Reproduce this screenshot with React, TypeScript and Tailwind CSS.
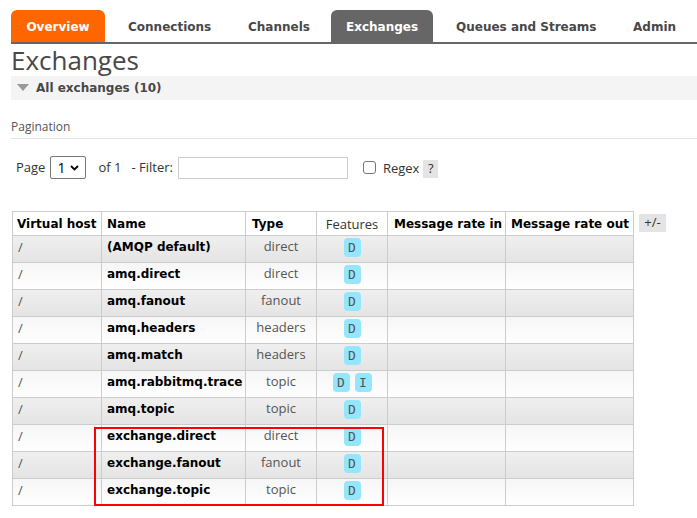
import React from "react";

const rows: { name: string; type: string; feats: string[] }[] = [
  { name: "(AMQP default)", type: "direct", feats: ["D"] },
  { name: "amq.direct", type: "direct", feats: ["D"] },
  { name: "amq.fanout", type: "fanout", feats: ["D"] },
  { name: "amq.headers", type: "headers", feats: ["D"] },
  { name: "amq.match", type: "headers", feats: ["D"] },
  { name: "amq.rabbitmq.trace", type: "topic", feats: ["D", "I"] },
  { name: "amq.topic", type: "topic", feats: ["D"] },
  { name: "exchange.direct", type: "direct", feats: ["D"] },
  { name: "exchange.fanout", type: "fanout", feats: ["D"] },
  { name: "exchange.topic", type: "topic", feats: ["D"] },
];

const bold = "font-['DejaVu_Sans','Verdana',sans-serif] font-bold";

export default function App() {
  return (
    <div className="relative w-[697px] h-[518px] overflow-hidden bg-white font-['Open_Sans','Noto_Sans',sans-serif] text-[#484848]">
      {/* nav */}
      <div className="pl-[11px] pt-[10px]">
        <div className={`flex items-end h-[34px] border-b-2 border-[#666] text-[12px] ${bold}`}>
          <div className="w-[94px] h-full pt-[1px] rounded-t-[6px] bg-[#ff6600] text-white flex items-center justify-center">Overview</div>
          <div className="w-[141px] h-full pt-[1px] flex items-center pl-[23px] text-[#484848]">Connections</div>
          <div className="w-[85px] h-full pt-[1px] flex items-center pl-[2px] text-[#484848]">Channels</div>
          <div className="w-[102px] h-full pt-[1px] rounded-t-[6px] bg-[#666] text-white flex items-center justify-center">Exchanges</div>
          <div className="w-[177px] h-full pt-[1px] flex items-center pl-[23px] text-[#484848]">Queues and Streams</div>
          <div className="h-full pt-[1px] flex items-center pl-[23px] text-[#484848]">Admin</div>
        </div>
      </div>
      {/* heading */}
      <div className="pl-[11px]">
        <h1 className="text-[26px] leading-[32px] text-[#484848] font-normal">Exchanges</h1>
        <div className="h-[24px] bg-[#f4f4f4] flex items-center">
          <svg width="12" height="8" viewBox="0 0 12 8" className="ml-[6px] mr-[7px]">
            <polygon points="0,0 12,0 6,7" fill="#999" />
          </svg>
          <span className={`text-[12px] text-[#484848] ${bold}`}>All exchanges (10)</span>
        </div>
        <div className="mt-[19px] text-[12px] leading-[16px] text-[#555] pb-[3px] border-b border-[#e4e4e4]">Pagination</div>
        {/* pagination row */}
        <div className="flex items-center h-[23px] mt-[17px] text-[13px] text-[#333]">
          <span className="ml-[5px]">Page</span>
          <div className="ml-[5px] w-[36px] h-[23px] border border-[#767676] rounded-[2px] flex items-center justify-between px-[6px] text-[14px] text-black">
            <span>1</span>
            <svg width="9" height="6" viewBox="0 0 9 6"><path d="M1 1 L4.5 4.5 L8 1" stroke="#000" strokeWidth="1.8" fill="none" /></svg>
          </div>
          <span className="ml-[12px]">of 1</span>
          <span className="ml-[10px]">- Filter:</span>
          <div className="ml-[5px] w-[170px] h-[22px] border border-[#ccc]" />
          <div className="ml-[15px] w-[13px] h-[13px] border border-[#767676] rounded-[3px] bg-white" />
          <span className="ml-[7px] mt-[3px]">Regex</span>
          <span className="ml-[4px] mt-[2px] w-[15px] h-[18px] bg-[#e4e4e4] flex items-center justify-center text-[13px]">?</span>
        </div>
        {/* table */}
        <div className="flex items-start mt-[32px] pl-[1px]">
          <table className="table-fixed w-[621px] border-collapse text-[13px] leading-[16px] whitespace-nowrap">
            <colgroup>
              <col className="w-[89px]" />
              <col className="w-[144px]" />
              <col className="w-[71px]" />
              <col className="w-[71px]" />
              <col className="w-[118px]" />
              <col className="w-[128px]" />
            </colgroup>
            <thead>
              <tr className="h-[24px] bg-white">
                <th className={`border border-[#ccc] text-left px-[4px] text-black text-[12px] ${bold}`}>Virtual host</th>
                <th className={`border border-[#ccc] text-left px-[5px] text-black text-[12px] ${bold}`}>Name</th>
                <th className={`border border-[#ccc] text-left px-[6px] text-black text-[12px] ${bold}`}>Type</th>
                <th className="border border-[#ccc] text-center font-normal text-[#333] text-[13px]">Features</th>
                <th className={`border border-[#ccc] text-left px-[6px] text-black text-[12px] ${bold}`}>Message rate in</th>
                <th className={`border border-[#ccc] text-left px-[5px] text-black text-[12px] ${bold}`}>Message rate out</th>
              </tr>
            </thead>
            <tbody>
              {rows.map((r, i) => (
                <tr
                  key={r.name}
                  className={`h-[27px] ${i % 2 === 0 ? "bg-gradient-to-b from-[#efefef] to-[#e4e4e4]" : "bg-gradient-to-b from-[#f6f6f6] to-[#ffffff]"}`}
                >
                  <td className="border border-[#ccc] align-top px-[5px] pt-[3px] text-[#555]">/</td>
                  <td className={`border border-[#ccc] align-top px-[5px] pt-[3px] text-black text-[12px] ${bold}`}>{r.name}</td>
                  <td className="border border-[#ccc] align-top text-center pt-[2px] text-[#555]">{r.type}</td>
                  <td className="border border-[#ccc] align-top pt-[2px]">
                    <div className="flex justify-center gap-[5px]">
                      {r.feats.map((f) => (
                        <span key={f} className="shrink-0 w-[17px] h-[19px] rounded-[4px] bg-[#94e6fc] text-[#555] flex items-center justify-center text-[13px] font-['DejaVu_Sans_Mono',monospace]">{f}</span>
                      ))}
                    </div>
                  </td>
                  <td className="border border-[#ccc]" />
                  <td className="border border-[#ccc]" />
                </tr>
              ))}
            </tbody>
          </table>
          <span className="ml-[5px] mt-[3px] w-[27px] h-[18px] bg-[#e4e4e4] text-[13px] text-[#333] flex items-center justify-center">+/-</span>
        </div>
      </div>
      {/* annotation */}
      <div className="absolute left-[94px] top-[427px] w-[290px] h-[79px] border-2 border-[#ff0000]" />
    </div>
  );
}
